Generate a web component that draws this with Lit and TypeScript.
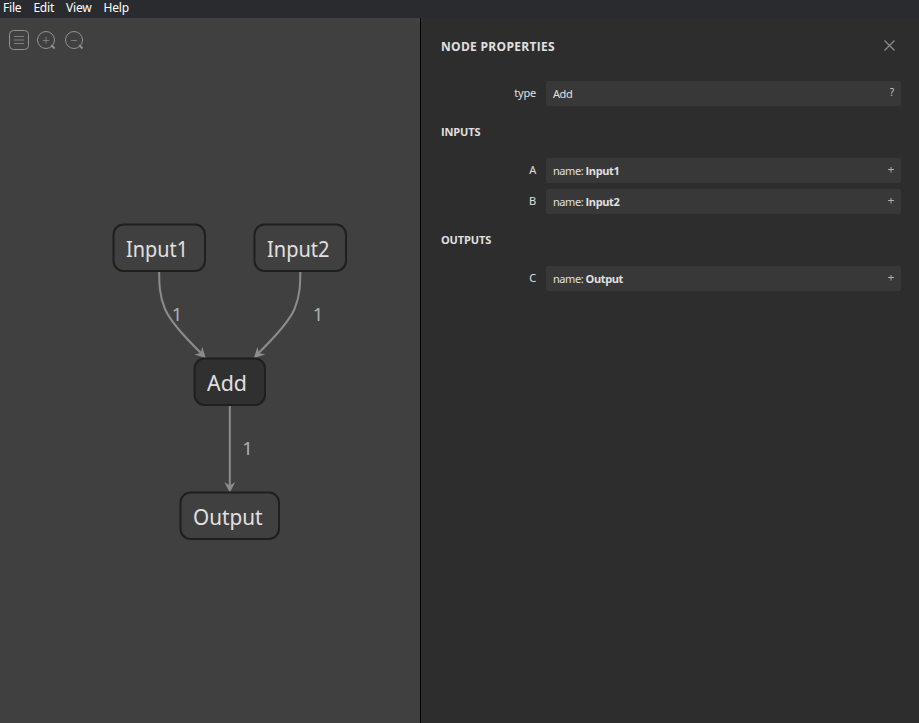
import { LitElement, html, svg, css } from "lit";
import { customElement } from "lit/decorators.js";

interface GraphNode { label: string; x: number; y: number; w: number; textX: number; textW: number; selected?: boolean }
interface GraphEdge { d: string; tip: [number, number]; angle: number; labelX: number; labelY: number }

const NODES: GraphNode[] = [
  { label: "Input1", x: 113.5, y: 224.5, w: 91.5, textX: 126, textW: 62 },
  { label: "Input2", x: 254.5, y: 224.5, w: 91.5, textX: 267, textW: 62.5 },
  { label: "Add", x: 194.5, y: 358.5, w: 70.5, textX: 207, textW: 40, selected: true },
  { label: "Output", x: 180.5, y: 492.5, w: 98.5, textX: 193, textW: 69.5 },
];

const EDGES: GraphEdge[] = [
  { d: "M159.2 271.5C159.2 283 159.2 295 165 309C171 323 186.5 339 203 355", tip: [205.7, 358], angle: 45, labelX: 171.7, labelY: 321 },
  { d: "M300.3 271.5C300.3 283 300.3 295 294.5 309C288.5 323 273 339 256.5 355", tip: [253.9, 358], angle: 135, labelX: 312.7, labelY: 321 },
  { d: "M229.8 405.5V489", tip: [229.8, 492.5], angle: 90, labelX: 242.2, labelY: 455 },
];

@customElement("node-graph")
class NodeGraph extends LitElement {
  static styles = css`
    :host { display: block; flex: 1; min-width: 0; background: #404040; }
    svg { display: block; }
    .edge { fill: none; stroke: #8c8c8c; stroke-width: 2; }
    .arrow { fill: #8c8c8c; }
    .box { fill: #404040; stroke: #1f1f1f; stroke-width: 2; }
    .selected { fill: #303030; }
    text { font-family: "Noto Sans", "Open Sans", sans-serif; }
    .name { font-size: 21.5px; fill: #e0e0e0; }
    .count { font-size: 18.5px; fill: #b0b0b0; }
    .icon { fill: none; stroke: #929292; stroke-width: 1; }
    .dim { stroke: #7c7c7c; }
    .handle { stroke-width: 1.8; }
  `;

  render() {
    return html`
      <svg width="420" height="705" viewBox="0 18 420 705">
        <g class="icon">
          <rect x="9.5" y="30.5" width="19" height="19" rx="4"></rect>
          <path class="dim" d="M14 36.5H24M14 40H24M14 43.5H24"></path>
          <circle cx="46" cy="40" r="8.5"></circle>
          <path class="dim" d="M43 40.5H49M46 37V43.5"></path>
          <path class="handle" d="M51.2 45.2L54.5 48.5"></path>
          <circle cx="74" cy="40" r="8.5"></circle>
          <path class="dim" d="M71 40.5H77"></path>
          <path class="handle" d="M79.2 45.2L82.5 48.5"></path>
        </g>
        ${EDGES.map(e => svg`
          <path class="edge" d=${e.d}></path>
          <path class="arrow" d="M0 0L-10.5 -5.5L-7 0L-10.5 5.5Z" transform="translate(${e.tip[0]} ${e.tip[1]}) rotate(${e.angle})"></path>
          <text class="count" x=${e.labelX} y=${e.labelY}>1</text>`)}
        ${NODES.map(n => svg`
          <rect class="box ${n.selected ? "selected" : ""}" x=${n.x} y=${n.y} width=${n.w} height="46.5" rx="10"></rect>
          <text class="name" x=${n.textX} y=${n.y + 32.5} textLength=${n.textW} lengthAdjust="spacingAndGlyphs">${n.label}</text>`)}
      </svg>`;
  }
}

@customElement("node-properties")
class NodeProperties extends LitElement {
  static styles = css`
    :host { display: block; box-sizing: border-box; width: 499px; padding: 0 18px 0 20px;
      border-left: 1px solid #000; background: #2d2d2d; color: #e0e0e0;
      font: 11px/25px "Noto Sans", "Open Sans", sans-serif; }
    header { display: flex; justify-content: space-between; align-items: center; height: 57px; margin-bottom: 6px; }
    h1, h2 { margin: 0; font-weight: 700; font-family: "Open Sans", sans-serif; }
    h1 { font-size: 12px; letter-spacing: 0.3px; }
    h2 { font-size: 11px; line-height: 20px; margin: 16px 0; letter-spacing: -0.15px; }
    .close { width: 11px; height: 11px; margin: -2px 6px 0 0; stroke: #8b8b8b; stroke-width: 1.3; }
    .row { display: grid; grid-template-columns: 95px 355px; grid-template-rows: 25px; column-gap: 10px; }
    .row + .row { margin-top: 6px; }
    .label { text-align: right; line-height: 24px; letter-spacing: -0.2px; }
    .field { display: flex; justify-content: space-between; padding: 0 7px; border-radius: 2px; background: #383838; }
    .value { letter-spacing: -0.45px; line-height: 26px; }
    .value b { font-family: "Open Sans", sans-serif; font-weight: 700; letter-spacing: -0.4px; }
    .mark { font-size: 10px; line-height: 23px; color: #c8c8c8; }
    .plus { width: 6px; height: 6px; margin-top: 9px; stroke: #a5b0b5; }
  `;

  private row(label: string, value: unknown, mark: string) {
    return html`
      <div class="row">
        <span class="label">${label}</span>
        <div class="field">
          <span class="value">${value}</span>
          ${mark === "+"
            ? html`<svg class="plus" viewBox="0 0 6 6"><path d="M0 2.5H6M3 0V5.5"></path></svg>`
            : html`<span class="mark">${mark}</span>`}
        </div>
      </div>`;
  }

  private port(label: string, name: string) {
    return this.row(label, html`name: <b>${name}</b>`, "+");
  }

  render() {
    return html`
      <header>
        <h1>NODE PROPERTIES</h1>
        <svg class="close" viewBox="0 0 11 11"><path d="M.5 .5L10.5 10.5M10.5 .5L.5 10.5"></path></svg>
      </header>
      ${this.row("type", "Add", "?")}
      <h2>INPUTS</h2>
      ${this.port("A", "Input1")}
      ${this.port("B", "Input2")}
      <h2>OUTPUTS</h2>
      ${this.port("C", "Output")}`;
  }
}

@customElement("app-root")
class AppRoot extends LitElement {
  static styles = css`
    :host { display: flex; flex-direction: column; width: 100%; height: 100vh; overflow: hidden; background: #404040; }
    nav { display: flex; gap: 12px; height: 18px; padding-left: 3px; background: #2a2b2f; color: #fff;
      font: 12px/16px "Noto Sans", "Open Sans", sans-serif; letter-spacing: -0.2px; }
    main { display: flex; flex: 1; min-height: 0; }
  `;

  render() {
    return html`
      <nav>${["File", "Edit", "View", "Help"].map(m => html`<span>${m}</span>`)}</nav>
      <main><node-graph></node-graph><node-properties></node-properties></main>`;
  }
}
